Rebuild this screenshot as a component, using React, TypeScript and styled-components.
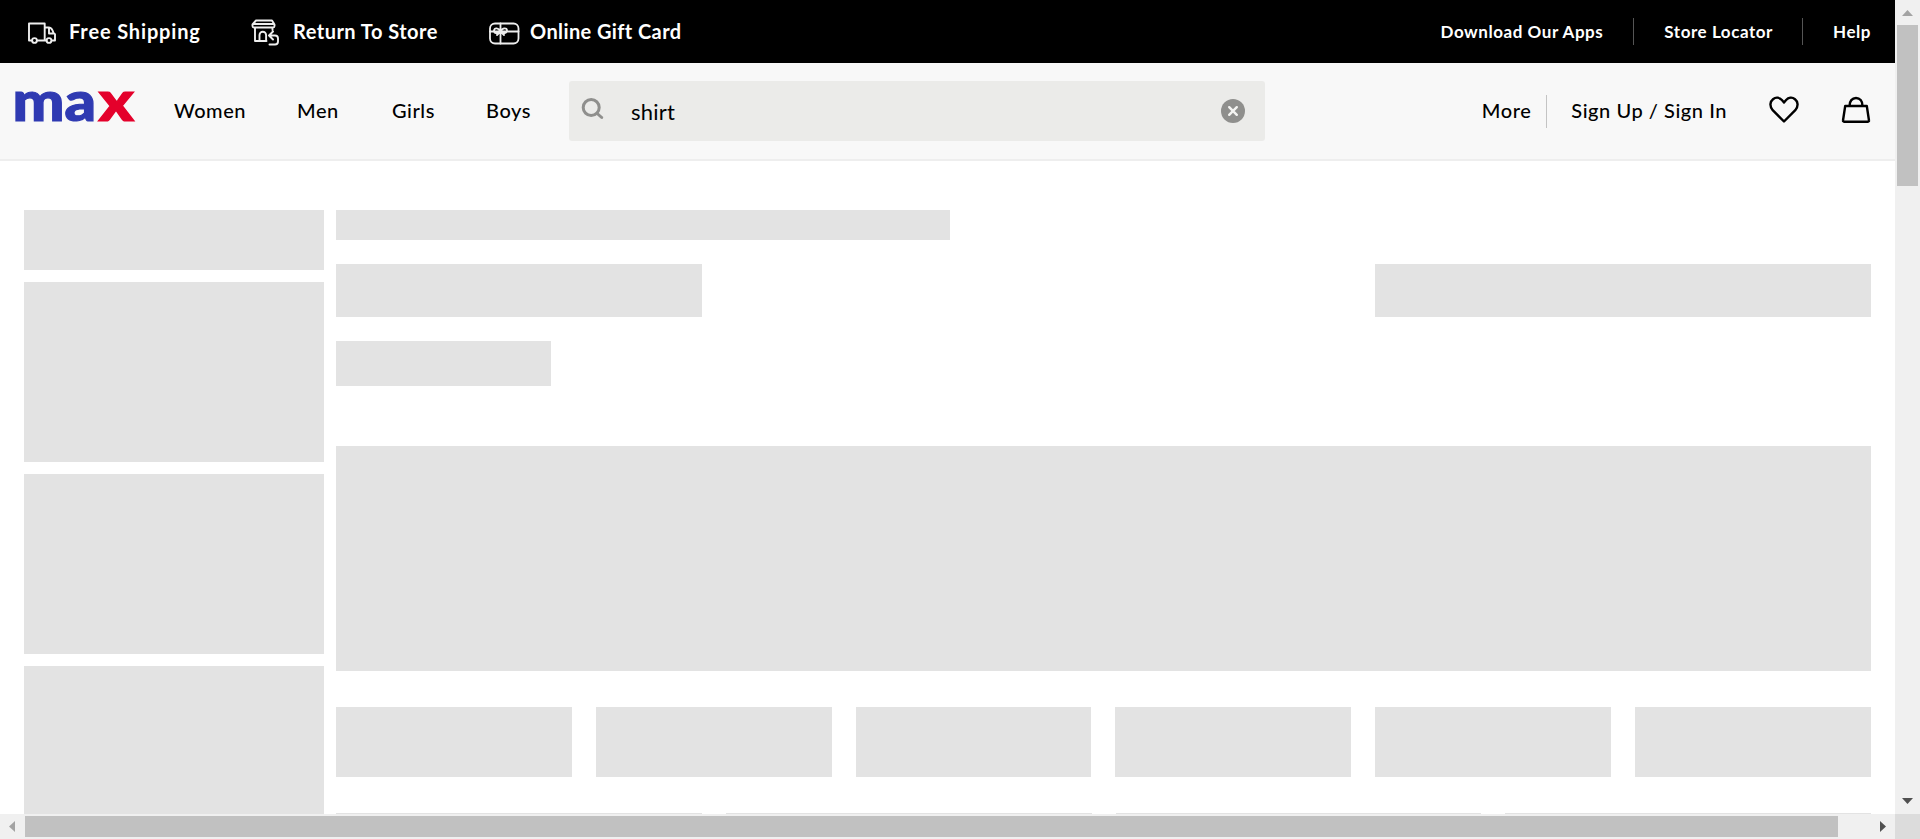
import React from "react";
import styled, { createGlobalStyle } from "styled-components";

const GlobalStyle = createGlobalStyle`
  * { box-sizing: border-box; }
  body { margin: 0; background: #fff; font-family: Lato, "Liberation Sans", sans-serif; overflow: hidden; }
`;

const Screen = styled.div`
  display: grid;
  grid-template: 814px 25px / 1895px 25px;
  width: 1920px;
  height: 839px;
  overflow: hidden;
`;
const Viewport = styled.div`
  overflow: hidden;
  background: #fff;
`;
const TopBar = styled.div`
  display: flex;
  align-items: center;
  height: 63px;
  padding: 0 24px 0 27px;
  background: #000;
  color: #fff;
`;
const Promo = styled.div<{ $w: number }>`
  display: flex;
  align-items: center;
  width: ${(p) => p.$w}px;
  svg { flex: none; }
`;
const Text = styled.span<{ $size?: number; $ls?: number; $weight?: number }>`
  font-size: ${(p) => p.$size ?? 20}px;
  font-weight: ${(p) => p.$weight ?? 500};
  letter-spacing: ${(p) => p.$ls ?? 0.5}px;
  line-height: 24px;
  white-space: nowrap;
`;
const PromoLabel = styled(Text).attrs({ $weight: 700 })`
  margin: 0 0 2px 10px;
`;
const UtilityLink = styled(Text).attrs({ $weight: 700, $ls: 0.55, $size: 17 })``;
const NavLink = styled(Text).attrs({ $weight: 500, $ls: 0.55 })`
  margin-bottom: 2px;
`;
const Spacer = styled.div`
  flex: 1;
`;
const Divider = styled.div<{ $h: number; $c: string; $l: number; $r: number }>`
  width: 1px;
  height: ${(p) => p.$h}px;
  background: ${(p) => p.$c};
  margin: 0 ${(p) => p.$r}px 0 ${(p) => p.$l}px;
`;
const Slot = styled.div<{ $w: number }>`
  display: flex;
  flex: none;
  width: ${(p) => p.$w}px;
`;
const NavBar = styled.header`
  display: flex;
  align-items: center;
  height: 98px;
  padding: 0 24px 0 10px;
  background: #f8f8f8;
  border-bottom: 2px solid #eee;
`;
const Logo = styled.svg`
  flex: none;
  margin: 0 36px 22px 0;
  font-family: Lato, sans-serif;
  font-weight: 900;
  font-size: 55px;
  stroke-width: 1.2;
`;
const Search = styled.div`
  display: flex;
  align-items: center;
  width: 696px;
  height: 60px;
  padding: 0 20px 0 12px;
  border-radius: 3px;
  background: #ebebe9;
`;
const Query = styled(Text)`
  margin: 2px 0 0 26px;
`;
const Actions = styled.div`
  display: flex;
  gap: 42px;
  margin: 0 0 3px 42px;
`;

const Page = styled.main`
  display: flex;
  gap: 12px;
  padding: 49px 24px 0;
`;
const Sidebar = styled.div`
  display: flex;
  flex-direction: column;
  gap: 12px;
  width: 300px;
`;
const Main = styled.div`
  flex: 1;
`;
const Block = styled.div<{ $h: number; $w?: string; $mb?: number }>`
  width: ${(p) => p.$w ?? "100%"};
  height: ${(p) => p.$h}px;
  margin-bottom: ${(p) => p.$mb ?? 0}px;
  background: #e3e3e3;
`;
const SplitRow = styled.div`
  display: flex;
  justify-content: space-between;
  margin-bottom: 24px;
`;
const Grid = styled.div<{ $cols: number }>`
  display: grid;
  grid-template-columns: repeat(${(p) => p.$cols}, 1fr);
  gap: 24px;
  margin-bottom: 36px;
`;

const VTrack = styled.div`
  display: flex;
  flex-direction: column;
  align-items: center;
  justify-content: space-between;
  padding: 10px 2px 10px;
  background: #f0f0f0;
`;
const VThumb = styled.div`
  width: 21px;
  height: 161px;
  margin: 9px 0 auto;
  background: #c1c1c1;
`;
const HTrack = styled.div`
  display: flex;
  align-items: center;
  padding: 0 9px 0 9px;
  background: #f0f0f0;
`;
const HThumb = styled.div`
  width: 1813px;
  height: 21px;
  margin: 0 auto 0 10px;
  background: #c1c1c1;
`;
const Corner = styled.div`
  background: #dcdcdc;
`;

const line = { fill: "none", stroke: "currentColor", strokeLinecap: "round", strokeLinejoin: "round" } as const;

const Truck = () => (
  <svg width="32" height="32" viewBox="0 0 32 32" {...line} stroke="#eee" strokeWidth="1.9">
    <path d="M4.500 24.500H2V7.500H17.700V24.500H10.500M17.700 11.500h4.300c3 0 3.900 3.400 4.500 5.500l1.500 1.200v6.300h-2.500M19.500 24.500H17.700M22 12v5.500h4.500" />
    <circle cx="7.500" cy="24.500" r="2.400" />
    <circle cx="22" cy="24.500" r="2.400" />
  </svg>
);
const Store = () => (
  <svg width="32" height="32" viewBox="2 0 32 32" {...line} stroke="#eee" strokeWidth="1.9">
    <path d="M7 4.500h16l2.500 4v1.500a1.500 1.500 0 0 1-1.500 1.500H5A1.500 1.500 0 0 1 3.500 10V8.500zM4 8h21M6 11.500V25H17.500M23.500 11.500V14M10.500 25v-6a3.300 3.300 0 0 1 6.600 0v6M24 15.500l-4 4 4 4M20.500 19.500h5.500a3 3 0 0 1 3 3v3a3 3 0 0 1-3 3h-5.500" />
  </svg>
);
const Gift = () => (
  <svg width="32" height="32" viewBox="0 0 32 32" {...line} stroke="#eee" strokeWidth="1.8">
    <rect x="2" y="7.500" width="28.500" height="20" rx="5" />
    <path d="M12.500 7.500v20M2 15.500h28.500M12.500 15.500c-2-4-6-4-6.500-1s4 3.500 6.500 1c2.500 2.500 6.500 2 6.500-1s-4.500-3-6.500 1l-3.500 3.500M12.500 15.500l3.500 3.500" />
  </svg>
);
const SearchGlyph = styled.svg`
  margin-bottom: 4px;
`;
const SearchIcon = () => (
  <SearchGlyph width="24" height="24" viewBox="0 0 24 24" {...line} stroke="#8f8f8d" strokeWidth="3">
    <circle cx="10.200" cy="10.500" r="8" />
    <path d="m16.200 16.500 4.500 4" />
  </SearchGlyph>
);
const ClearIcon = () => (
  <svg width="24" height="24" viewBox="0 0 24 24">
    <circle cx="12" cy="12" r="12" fill="#8f8f8d" />
    <path d="m8.200 8.200 7.600 7.600m0-7.600-7.600 7.600" stroke="#f4f4f2" strokeWidth="2.400" strokeLinecap="round" />
  </svg>
);
const Heart = () => (
  <svg width="30" height="28" viewBox="0 0 30 28" {...line} strokeWidth="2.400">
    <path d="M15 25.500 3.700 14.200C.300 10.300 1 5.500 4 3.200c3-2.400 6.600-1.600 8.900.8L15 6.500l2.100-2.500C19.400 1.600 23 .800 26 3.200c3 2.300 3.700 7.100.300 11z" />
  </svg>
);
const Bag = () => (
  <svg width="30" height="28" viewBox="0 0 30 28" {...line} strokeWidth="2.400">
    <path d="M4.200 10h21.600L28 24.500a1 1 0 0 1-1 1.200H3a1 1 0 0 1-1-1.200zM8.500 10c0-5 2.700-8 6.500-8s6.500 3 6.500 8" />
  </svg>
);
const Arrow = ({ d, color, w, h }: { d: string; color: string; w: number; h: number }) => (
  <svg width={w} height={h} viewBox={`0 0 ${w} ${h}`}>
    <path d={d} fill={color} />
  </svg>
);

export default function App() {
  return (
    <Screen>
      <GlobalStyle />
      <Viewport>
        <TopBar>
          <Promo $w={224}><Truck /><PromoLabel $ls={0.85}>Free Shipping</PromoLabel></Promo>
          <Promo $w={237}><Store /><PromoLabel $ls={0.48}>Return To Store</PromoLabel></Promo>
          <Promo $w={220}><Gift /><PromoLabel $ls={0.4}>Online Gift Card</PromoLabel></Promo>
          <Spacer />
          <UtilityLink>Download Our Apps</UtilityLink>
          <Divider $h={27} $c="#555" $l={30} $r={30} />
          <UtilityLink>Store Locator</UtilityLink>
          <Divider $h={27} $c="#555" $l={29} $r={30} />
          <UtilityLink>Help</UtilityLink>
        </TopBar>
        <NavBar>
          <Logo width="128" height="70" viewBox="-4 0 128 70">
            <text x="-1.500" y="55.500" textLength="83.500" lengthAdjust="spacingAndGlyphs" fill="#2f3ab2" stroke="#2f3ab2">ma</text>
            <text x="84.500" y="55.500" textLength="35.500" lengthAdjust="spacingAndGlyphs" fill="#e4002b" stroke="#e4002b">x</text>
          </Logo>
          <Slot $w={123}><NavLink>Women</NavLink></Slot>
          <Slot $w={95}><NavLink>Men</NavLink></Slot>
          <Slot $w={94}><NavLink>Girls</NavLink></Slot>
          <Slot $w={83}><NavLink>Boys</NavLink></Slot>
          <Search>
            <SearchIcon />
            <Query $size={22} $weight={400} $ls={0.2}>shirt</Query>
            <Spacer />
            <ClearIcon />
          </Search>
          <Spacer />
          <NavLink>More</NavLink>
          <Divider $h={33} $c="#c4c4c4" $l={15} $r={24} />
          <NavLink>Sign Up / Sign In</NavLink>
          <Actions><Heart /><Bag /></Actions>
        </NavBar>
        <Page>
          <Sidebar>
            <Block $h={60} /><Block $h={180} /><Block $h={180} /><Block $h={180} />
          </Sidebar>
          <Main>
            <Block $h={30} $w="40%" $mb={24} />
            <SplitRow><Block $h={53} $w="365.75px" /><Block $h={53} $w="495.67px" /></SplitRow>
            <Block $h={45} $w="14%" $mb={60} />
            <Block $h={225} $mb={36} />
            <Grid $cols={6}>{[0, 1, 2, 3, 4, 5].map((i) => <Block key={i} $h={70} />)}</Grid>
            <Grid $cols={4}>{[0, 1, 2, 3].map((i) => <Block key={i} $h={300} />)}</Grid>
          </Main>
        </Page>
      </Viewport>
      <VTrack>
        <Arrow w={11} h={6} color="#a3a3a3" d="M5.500 0 11 6H0z" />
        <VThumb />
        <Arrow w={11} h={6} color="#505050" d="M0 0h11L5.500 6z" />
      </VTrack>
      <HTrack>
        <Arrow w={6} h={11} color="#a3a3a3" d="M6 0v11L0 5.500z" />
        <HThumb />
        <Arrow w={6} h={11} color="#505050" d="M0 0v11l6-5.500z" />
      </HTrack>
      <Corner />
    </Screen>
  );
}
